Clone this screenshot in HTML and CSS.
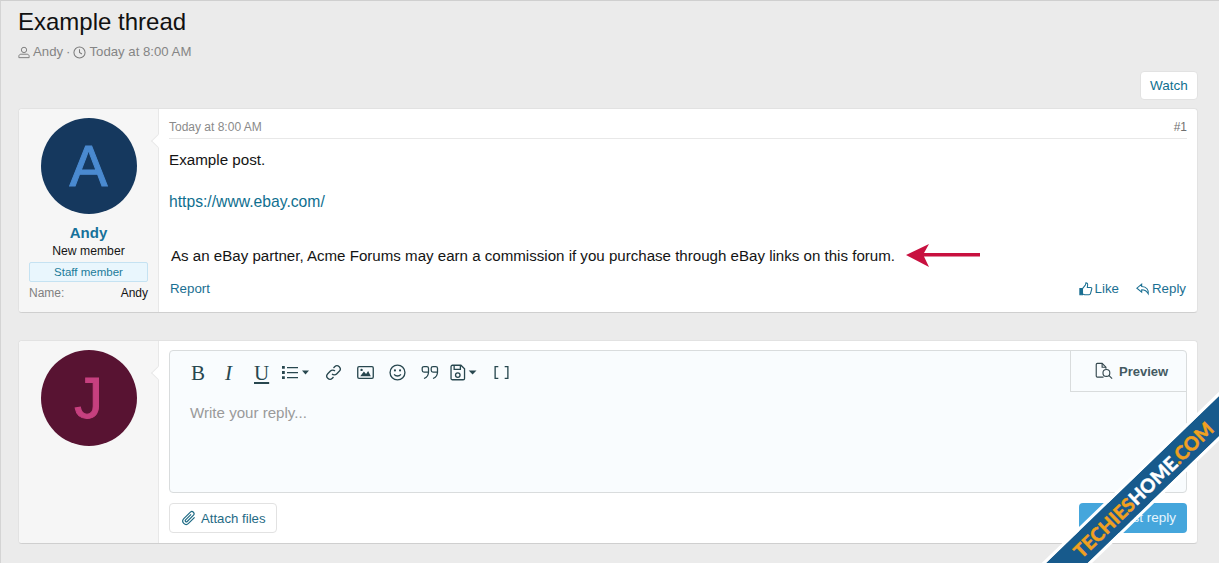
FILE: index.html
```html
<!DOCTYPE html>
<html lang="en">
<head>
<meta charset="utf-8">
<title>Example thread</title>
<link rel="stylesheet" href="styles.css">
</head>
<body>
<div class="page">
  <header class="head">
    <h1 class="title">Example thread</h1>
    <div class="meta">
      <svg class="ic12" viewBox="0 0 14 14"><circle cx="7" cy="4" r="3.100"/><path d="M1 13v-1.600C1 9.800 2.200 9 3.600 9h6.800c1.400 0 2.600.8 2.600 2.400V13z"/></svg>
      <span>Andy</span><span>·</span>
      <svg class="ic14" viewBox="0 0 14 14"><circle cx="7" cy="7" r="6"/><path d="M7 3.400V7l2.600 1.600"/></svg>
      <span>Today at 8:00 AM</span>
    </div>
  </header>
  <div class="watch-row"><a class="btn watch">Watch</a></div>

  <article class="card post">
    <aside class="side">
      <div class="avatar blue">A</div>
      <div class="uname">Andy</div>
      <div class="utitle">New member</div>
      <div class="staff">Staff member</div>
      <div class="pair"><span class="k">Name:</span><span>Andy</span></div>
    </aside>
    <div class="main">
      <div class="attr"><span>Today at 8:00 AM</span><span class="num">#1</span></div>
      <p class="line first">Example post.</p>
      <p class="line url">https://www.ebay.com/</p>
      <div class="notice">
        <span>As an eBay partner, Acme Forums may earn a commission if you purchase through eBay links on this forum.</span>
        <svg class="arrow" width="76" height="26" viewBox="0 0 76 26"><path d="M1 13 L24 2 L19 11 H75 V14.500 H19 L24 25 Z"/></svg>
      </div>
      <div class="foot">
        <a class="act">Report</a>
        <div class="acts">
          <a class="act"><svg class="ic15" viewBox="0 0 16 16"><path class="fill" d="M1 7.500h3v7H1z"/><path d="M4 7.500 7.200 3.600c.5-.8.5-1.600.7-2.600 1.400 0 2.100 1 2 2.200L9.500 6.200h3.800c1 0 1.600.9 1.300 1.800l-1.500 5.300c-.2.800-.9 1.200-1.600 1.200H6.500L4 13.600"/></svg>Like</a>
          <a class="act"><svg class="ic15" viewBox="0 0 16 16"><path d="M6.500 2.500 1 7l5.500 4.500V8.800c3.500 0 5.500.6 7.500 4.700.6-4.700-1.800-8-7.500-8.300z"/></svg>Reply</a>
        </div>
      </div>
    </div>
  </article>

  <article class="card reply">
    <aside class="side"><div class="avatar maroon">J</div></aside>
    <div class="main editor-wrap">
      <div class="editor">
        <div class="toolbar">
          <div class="tools">
            <span class="tool b">B</span>
            <span class="tool i">I</span>
            <span class="tool u">U</span>
            <svg class="tool-ic wide" viewBox="0 0 28 16"><path d="M5 3h11M5 8h11M5 13h11"/><path class="fill nos" d="M0 1.500h2.800v2.800H0zM0 6.600h2.800v2.800H0zM0 11.700h2.800v2.800H0zM20 6h7l-3.500 4z"/></svg>
            <svg class="tool-ic" viewBox="0 0 16 16"><path d="M6.600 9.400a3 3 0 0 0 4.300 0l2.500-2.500a3 3 0 0 0-4.300-4.300L8 3.700"/><path d="M9.400 6.600a3 3 0 0 0-4.300 0L2.600 9.100a3 3 0 0 0 4.300 4.300L8 12.300"/></svg>
            <svg class="tool-ic" viewBox="0 0 16 16"><rect x=".7" y="2.500" width="14.600" height="11" rx="1.200"/><path class="fill nos" d="M3 11.500 6.500 7l2 2.500L10.500 6.500 13 11.500z"/><circle class="fill nos" cx="4.300" cy="5.600" r="1.100"/></svg>
            <svg class="tool-ic" viewBox="0 0 16 16"><circle cx="8" cy="8" r="7"/><path d="M4.800 9.800c1.600 2 4.800 2 6.400 0"/><circle class="fill nos" cx="5.600" cy="6" r="1"/><circle class="fill nos" cx="10.400" cy="6" r="1"/></svg>
            <svg class="tool-ic quote" viewBox="0 0 18 16"><path d="M7.500 7.500V3.800C7.500 2.800 6.700 2 5.700 2H3C2 2 1.200 2.800 1.200 3.800v2C1.200 6.800 2 7.600 3 7.600h4.500zM7.500 7.500c0 3-1.500 5.500-4.500 6.500"/><path d="M16.500 7.500V3.800c0-1-.8-1.800-1.800-1.800H12c-1 0-1.800.8-1.800 1.800v2c0 1 .8 1.800 1.800 1.800h4.500zM16.500 7.500c0 3-1.500 5.500-4.500 6.500"/></svg>
            <svg class="tool-ic wide2" viewBox="0 0 26 16"><path d="M1 2.300C1 1.600 1.600 1 2.300 1h8.200L14 4.500v9.200c0 .7-.6 1.300-1.300 1.300H2.300C1.600 15 1 14.400 1 13.700z"/><path d="M4 1v4h6V1"/><circle cx="7.500" cy="10.500" r="2.200"/><path class="fill nos" d="M18 6h7.500l-3.750 4z"/></svg>
            <svg class="tool-ic brk" viewBox="0 0 16 16"><path d="M5 2.500H2v11h3M11 2.500h3v11h-3"/></svg>
          </div>
          <div class="preview">
            <svg class="prev-ic" viewBox="0 0 20 18"><path d="M9 15.500H2.500c-.8 0-1.200-.5-1.200-1.200V2.200C1.300 1.500 1.700 1 2.500 1h5l4 4v1.500"/><path d="M7.500 1v4h4"/><circle cx="12" cy="11" r="3.600"/><path d="m14.600 13.600 3.400 3.400"/></svg>
            <span>Preview</span>
          </div>
        </div>
        <div class="placeholder">Write your reply...</div>
      </div>
      <div class="editor-foot">
        <a class="btn attach"><svg class="ic16" viewBox="0 0 16 16"><path d="M13.600 7.300 7.500 13.400a3.300 3.300 0 0 1-4.700-4.700l6.600-6.600a2.200 2.200 0 0 1 3.100 3.100L6.200 11.500a1.100 1.100 0 0 1-1.600-1.600l5.500-5.500"/></svg>Attach files</a>
        <a class="post-btn">Post reply</a>
      </div>
    </div>
  </article>
</div>
<div class="overlay"><div class="ribbon"><span class="r-o">TECHIES</span><span class="r-w">HOME</span><span class="r-o">.COM</span></div></div>
</body>
</html>
```

FILE: styles.css
```css
* { box-sizing: border-box; }
html, body { margin: 0; height: 563px; overflow: hidden; }
body {
  width: 1219px;
  position: relative;
  background: #ebebeb;
  font-family: "Liberation Sans", Arial, sans-serif;
  color: #141414;
}
.page {
  height: 563px;
  padding: 0 21px 0 17px;
  border-top: 1px solid #cfcfcf;
  border-left: 1px solid #d4d4d4;
}
.head { height: 70px; }
.title {
  margin: 0;
  padding-top: 6px;
  font-size: 24px;
  font-weight: 400;
  line-height: 30px;
  color: #111;
}
.meta {
  display: flex;
  align-items: center;
  gap: 3px;
  margin-top: 6px;
  font-size: 13.200px;
  line-height: 18px;
  color: #858585;
}
.ic12 { width: 12px; height: 13px; fill: none; stroke: #7a7a7a; stroke-width: 1.100; }
.ic14 { width: 13px; height: 13px; fill: none; stroke: #7a7a7a; stroke-width: 1.100; }
.watch-row { display: flex; justify-content: flex-end; height: 37px; }
.btn {
  display: inline-flex;
  align-items: center;
  background: #fff;
  border: 1px solid #e2e2e2;
  border-radius: 4px;
  color: #0f6f8f;
  font-size: 13.500px;
}
.watch { width: 58px; height: 29px; justify-content: center; }
.card {
  display: flex;
  background: #fff;
  border: 1px solid #e2e2e2;
  border-bottom-color: #cfcfcf;
  border-radius: 4px;
}
.post { height: 205px; margin-bottom: 27px; }
.reply { height: 204px; }
.side {
  position: relative;
  flex: 0 0 140px;
  background: #f6f6f6;
  border-right: 1px solid #e8e8e8;
  border-radius: 4px 0 0 4px;
  padding-top: 9px;
  display: flex;
  flex-direction: column;
  align-items: center;
}
.side::after {
  content: "";
  position: absolute;
  right: -5px;
  top: 27px;
  width: 9px;
  height: 9px;
  background: #fff;
  border-left: 1px solid #e8e8e8;
  border-bottom: 1px solid #e8e8e8;
  transform: rotate(45deg);
}
.avatar {
  width: 96px;
  height: 96px;
  border-radius: 50%;
  display: flex;
  align-items: center;
  justify-content: center;
  font-size: 57px;
  line-height: 96px;
  -webkit-text-stroke: 1px currentColor;
}
.blue { background: #15385e; color: #4a8ad0; }
.maroon { background: #581332; color: #c6407f; }
.uname {
  margin-top: 10px;
  font-size: 15px;
  font-weight: 700;
  line-height: 17px;
  color: #17719a;
}
.utitle { margin-top: 3px; font-size: 12.200px; line-height: 15px; color: #141414; }
.staff {
  margin-top: 3px;
  width: 119px;
  height: 20px;
  line-height: 18px;
  text-align: center;
  font-size: 11.500px;
  color: #1b7a99;
  background: #e9f6fd;
  border: 1px solid #c5e2f2;
  border-radius: 2px;
}
.pair {
  width: 119px;
  margin-top: 4px;
  display: flex;
  justify-content: space-between;
  font-size: 12px;
  line-height: 15px;
}
.k { color: #808080; }
.main { flex: 1; min-width: 0; padding: 10px 10px 0 10px; display: flex; flex-direction: column; }
.attr {
  display: flex;
  justify-content: space-between;
  height: 20px;
  border-bottom: 1px solid #e8e8e8;
  font-size: 12px;
  line-height: 17px;
  color: #8a8a8a;
}
.num { color: #707070; }
.line { margin: 0; font-size: 15.200px; line-height: 20px; }
.first { margin-top: 11px; }
.url { margin-top: 22px; font-size: 15.700px; color: #0f6f8f; }
.notice {
  display: flex;
  align-items: center;
  margin-top: 30px;
  margin-left: 2px;
  height: 26px;
  font-size: 15.100px;
  white-space: nowrap;
}
.arrow { margin-left: 10px; fill: #c8103f; flex: none; }
.foot {
  margin-top: 11px;
  display: flex;
  justify-content: space-between;
  font-size: 13.300px;
  line-height: 20px;
}
.acts { display: flex; gap: 16px; padding-right: 1px; }
.act { display: inline-flex; align-items: center; gap: 2px; color: #1a6f92; margin-left: 1px; }
.ic15 { width: 14px; height: 14px; fill: none; stroke: #1a6f92; stroke-width: 1.200; }
.ic15 .fill { fill: #1a6f92; }
.editor-wrap { padding-top: 9px; }
.editor {
  height: 143px;
  background: #f9fcfe;
  border: 1px solid #d9dcdd;
  border-radius: 4px;
}
.toolbar { display: flex; justify-content: space-between; height: 41px; }
.tools { display: flex; align-items: center; padding-left: 21px; height: 43px; color: #28474f; }
.tool {
  flex: none;
  font-family: "Liberation Serif", serif;
  font-size: 21px;
  line-height: 22px;
}
.b { width: 34px; }
.i { font-style: italic; width: 29px; }
.u { text-decoration: underline; width: 28px; }
.tool-ic { width: 17px; height: 17px; flex: none; margin-right: 15px; fill: none; stroke: #28474f; stroke-width: 1.250; }
.tool-ic.wide { width: 28px; margin-right: 15px; }
.tool-ic.wide2 { width: 27px; margin-right: 16px; }
.tool-ic.quote { width: 18px; margin-right: 11px; }
.tool-ic.brk { margin-right: 0; }
.tool-ic .fill { fill: #28474f; }
.tool-ic .nos { stroke: none; }
.preview {
  width: 116px;
  height: 41px;
  display: flex;
  align-items: center;
  padding-left: 24px;
  gap: 5px;
  border-left: 1px solid #d9dcdd;
  border-bottom: 1px solid #d9dcdd;
  font-size: 13px;
  font-weight: 700;
  color: #445a62;
}
.prev-ic { width: 19px; height: 18px; fill: none; stroke: #34474e; stroke-width: 1.200; }
.placeholder { margin-top: 11px; padding-left: 20px; font-size: 15.100px; line-height: 20px; color: #9a9a9a; }
.editor-foot { display: flex; justify-content: space-between; align-items: center; margin-top: 10px; }
.attach { height: 30px; width: 108px; padding-left: 11px; gap: 4px; font-size: 13.200px; color: #1f6b85; }
.ic16 { width: 16px; height: 16px; fill: none; stroke: #1f6b85; stroke-width: 1.200; }
.post-btn {
  width: 108px;
  height: 30px;
  border-radius: 4px;
  background: #45a6dc;
  color: #e6f5fd;
  font-size: 13.500px;
  line-height: 30px;
  text-align: right;
  padding-right: 11px;
}
.overlay {
  position: absolute;
  inset: 0;
  overflow: hidden;
  pointer-events: none;
}
.ribbon {
  position: absolute;
  left: 1003px;
  top: 475px;
  width: 280px;
  height: 29px;
  line-height: 29px;
  background: #175a8c;
  outline: 3px solid #fff;
  transform: rotate(-44deg);
  text-align: center;
  font-family: "Lato", sans-serif;
  font-weight: 900;
  font-size: 19px;
  -webkit-text-stroke: 0.4px currentColor;
  white-space: nowrap;
}
.r-o { color: #f0a020; }
.r-w { color: #fff; }
```
